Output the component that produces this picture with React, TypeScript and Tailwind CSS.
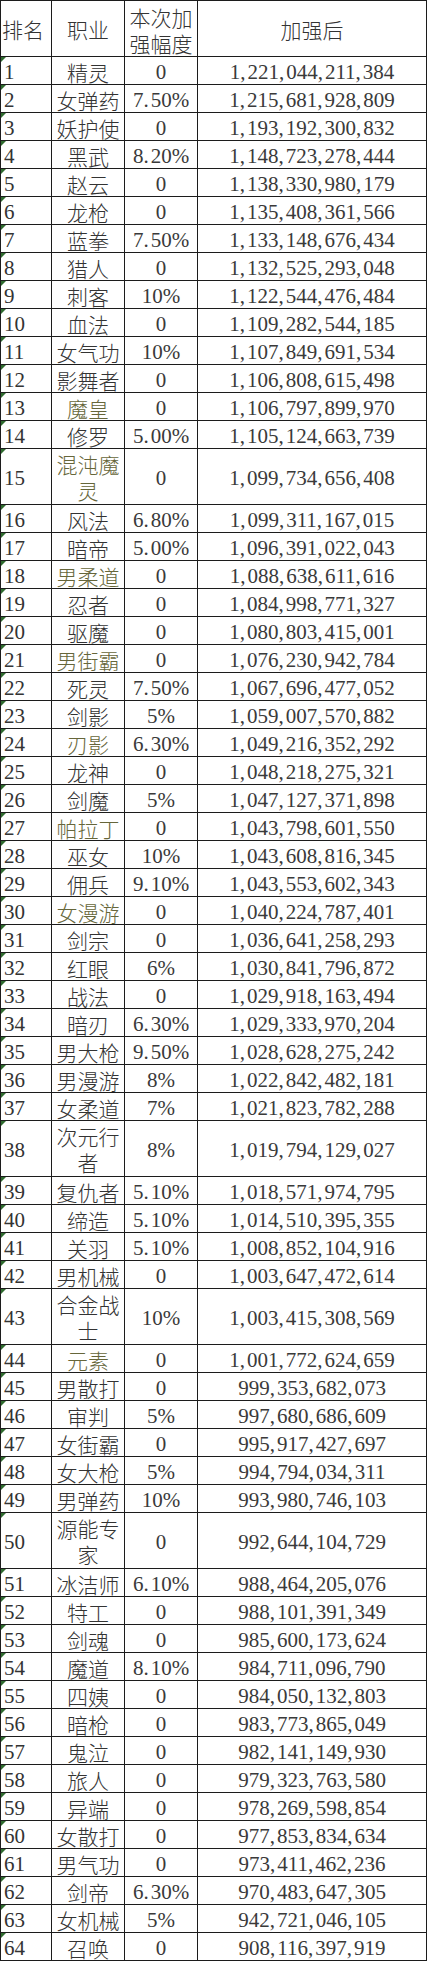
import React from 'react';

type Row = { name: string; pct: string; total: string; olive?: boolean };

const rows: Row[] = [
    { name: '精灵', pct: '0', total: '1,221,044,211,384' },
    { name: '女弹药', pct: '7.50%', total: '1,215,681,928,809' },
    { name: '妖护使', pct: '0', total: '1,193,192,300,832' },
    { name: '黑武', pct: '8.20%', total: '1,148,723,278,444' },
    { name: '赵云', pct: '0', total: '1,138,330,980,179' },
    { name: '龙枪', pct: '0', total: '1,135,408,361,566' },
    { name: '蓝拳', pct: '7.50%', total: '1,133,148,676,434' },
    { name: '猎人', pct: '0', total: '1,132,525,293,048' },
    { name: '刺客', pct: '10%', total: '1,122,544,476,484' },
    { name: '血法', pct: '0', total: '1,109,282,544,185' },
    { name: '女气功', pct: '10%', total: '1,107,849,691,534' },
    { name: '影舞者', pct: '0', total: '1,106,808,615,498' },
    { name: '魔皇', pct: '0', total: '1,106,797,899,970', olive: true },
    { name: '修罗', pct: '5.00%', total: '1,105,124,663,739' },
    { name: '混沌魔灵', pct: '0', total: '1,099,734,656,408', olive: true },
    { name: '风法', pct: '6.80%', total: '1,099,311,167,015' },
    { name: '暗帝', pct: '5.00%', total: '1,096,391,022,043' },
    { name: '男柔道', pct: '0', total: '1,088,638,611,616', olive: true },
    { name: '忍者', pct: '0', total: '1,084,998,771,327' },
    { name: '驱魔', pct: '0', total: '1,080,803,415,001' },
    { name: '男街霸', pct: '0', total: '1,076,230,942,784', olive: true },
    { name: '死灵', pct: '7.50%', total: '1,067,696,477,052' },
    { name: '剑影', pct: '5%', total: '1,059,007,570,882' },
    { name: '刃影', pct: '6.30%', total: '1,049,216,352,292', olive: true },
    { name: '龙神', pct: '0', total: '1,048,218,275,321' },
    { name: '剑魔', pct: '5%', total: '1,047,127,371,898' },
    { name: '帕拉丁', pct: '0', total: '1,043,798,601,550', olive: true },
    { name: '巫女', pct: '10%', total: '1,043,608,816,345' },
    { name: '佣兵', pct: '9.10%', total: '1,043,553,602,343' },
    { name: '女漫游', pct: '0', total: '1,040,224,787,401', olive: true },
    { name: '剑宗', pct: '0', total: '1,036,641,258,293' },
    { name: '红眼', pct: '6%', total: '1,030,841,796,872' },
    { name: '战法', pct: '0', total: '1,029,918,163,494' },
    { name: '暗刃', pct: '6.30%', total: '1,029,333,970,204' },
    { name: '男大枪', pct: '9.50%', total: '1,028,628,275,242' },
    { name: '男漫游', pct: '8%', total: '1,022,842,482,181' },
    { name: '女柔道', pct: '7%', total: '1,021,823,782,288' },
    { name: '次元行者', pct: '8%', total: '1,019,794,129,027' },
    { name: '复仇者', pct: '5.10%', total: '1,018,571,974,795' },
    { name: '缔造', pct: '5.10%', total: '1,014,510,395,355' },
    { name: '关羽', pct: '5.10%', total: '1,008,852,104,916' },
    { name: '男机械', pct: '0', total: '1,003,647,472,614' },
    { name: '合金战士', pct: '10%', total: '1,003,415,308,569' },
    { name: '元素', pct: '0', total: '1,001,772,624,659', olive: true },
    { name: '男散打', pct: '0', total: '999,353,682,073' },
    { name: '审判', pct: '5%', total: '997,680,686,609' },
    { name: '女街霸', pct: '0', total: '995,917,427,697' },
    { name: '女大枪', pct: '5%', total: '994,794,034,311' },
    { name: '男弹药', pct: '10%', total: '993,980,746,103' },
    { name: '源能专家', pct: '0', total: '992,644,104,729' },
    { name: '冰洁师', pct: '6.10%', total: '988,464,205,076' },
    { name: '特工', pct: '0', total: '988,101,391,349' },
    { name: '剑魂', pct: '0', total: '985,600,173,624' },
    { name: '魔道', pct: '8.10%', total: '984,711,096,790' },
    { name: '四姨', pct: '0', total: '984,050,132,803' },
    { name: '暗枪', pct: '0', total: '983,773,865,049' },
    { name: '鬼泣', pct: '0', total: '982,141,149,930' },
    { name: '旅人', pct: '0', total: '979,323,763,580' },
    { name: '异端', pct: '0', total: '978,269,598,854' },
    { name: '女散打', pct: '0', total: '977,853,834,634' },
    { name: '男气功', pct: '0', total: '973,411,462,236' },
    { name: '剑帝', pct: '6.30%', total: '970,483,647,305' },
    { name: '女机械', pct: '5%', total: '942,721,046,105' },
    { name: '召唤', pct: '0', total: '908,116,397,919' },
];

const serif = "font-['Liberation_Serif','Noto_Sans_CJK_SC',serif]";
const cjk = "font-['Noto_Sans_CJK_SC',sans-serif] font-light";

const Spaced = ({ text, mark }: { text: string; mark: string }) => {
    const parts = text.split(mark);
    return (
        <>
            {parts.map((p, i) => (
                <React.Fragment key={i}>
                    {p}
                    {i < parts.length - 1 && <span className="mr-[2px]">{mark}</span>}
                </React.Fragment>
            ))}
        </>
    );
};

export default function App() {
    return (
        <div className="w-[427px] bg-white text-[#333] border-t border-l border-[#1c1c1c]">
            {/* HEADER */}
            <div className={`flex h-[56px] border-b border-[#1c1c1c] text-[21px] ${cjk}`}>
                <div className="w-[51px] shrink-0 border-r border-[#1c1c1c] flex items-center pl-[1px] pt-[3px]">排名</div>
                <div className="w-[73px] shrink-0 border-r border-[#1c1c1c] flex items-center justify-center pt-[3px]">职业</div>
                <div className="w-[73px] shrink-0 border-r border-[#1c1c1c] flex items-center justify-center text-center leading-[26px] pt-[2px] px-[2px]">本次加强幅度</div>
                <div className="w-[229px] shrink-0 border-r border-[#1c1c1c] flex items-center justify-center pt-[3px]">加强后</div>
            </div>

            {/* ROWS */}
            {rows.map((r, i) => {
                const tall = r.name.length > 3;
                return (
                    <div
                        key={r.name}
                        className={`flex border-b border-[#1c1c1c] ${tall ? 'h-[56px]' : 'h-[28px]'}`}
                    >
                        <div className={`relative w-[51px] shrink-0 border-r border-[#1c1c1c] flex items-center pl-[3px] pt-[3px] leading-[22px] text-[21px] ${serif}`}>
                            <span className="absolute left-0 top-0 w-0 h-0 border-t-[5px] border-t-[#2f6b2f] border-r-[5px] border-r-transparent" />
                            {i + 1}
                        </div>
                        <div
                            className={`w-[73px] shrink-0 border-r border-[#1c1c1c] flex justify-center text-center text-[21px] px-[2px] ${cjk} ${
                                tall ? 'items-start leading-[26px] pt-[2px]' : 'items-center leading-[22px] pt-[3px]'
                            } ${r.olive ? 'text-[#66663a]' : 'text-[#333]'}`}
                        >
                            {r.name}
                        </div>
                        <div className={`w-[73px] shrink-0 border-r border-[#1c1c1c] flex items-center justify-center pt-[3px] leading-[22px] text-[21px] text-[#3a3a3a] ${serif}`}>
                            <Spaced text={r.pct} mark="." />
                        </div>
                        <div className={`w-[229px] shrink-0 border-r border-[#1c1c1c] flex items-center justify-center pt-[3px] leading-[22px] text-[21px] text-[#3a3a3a] ${serif}`}>
                            <Spaced text={r.total} mark="," />
                        </div>
                    </div>
                );
            })}
        </div>
    );
}
